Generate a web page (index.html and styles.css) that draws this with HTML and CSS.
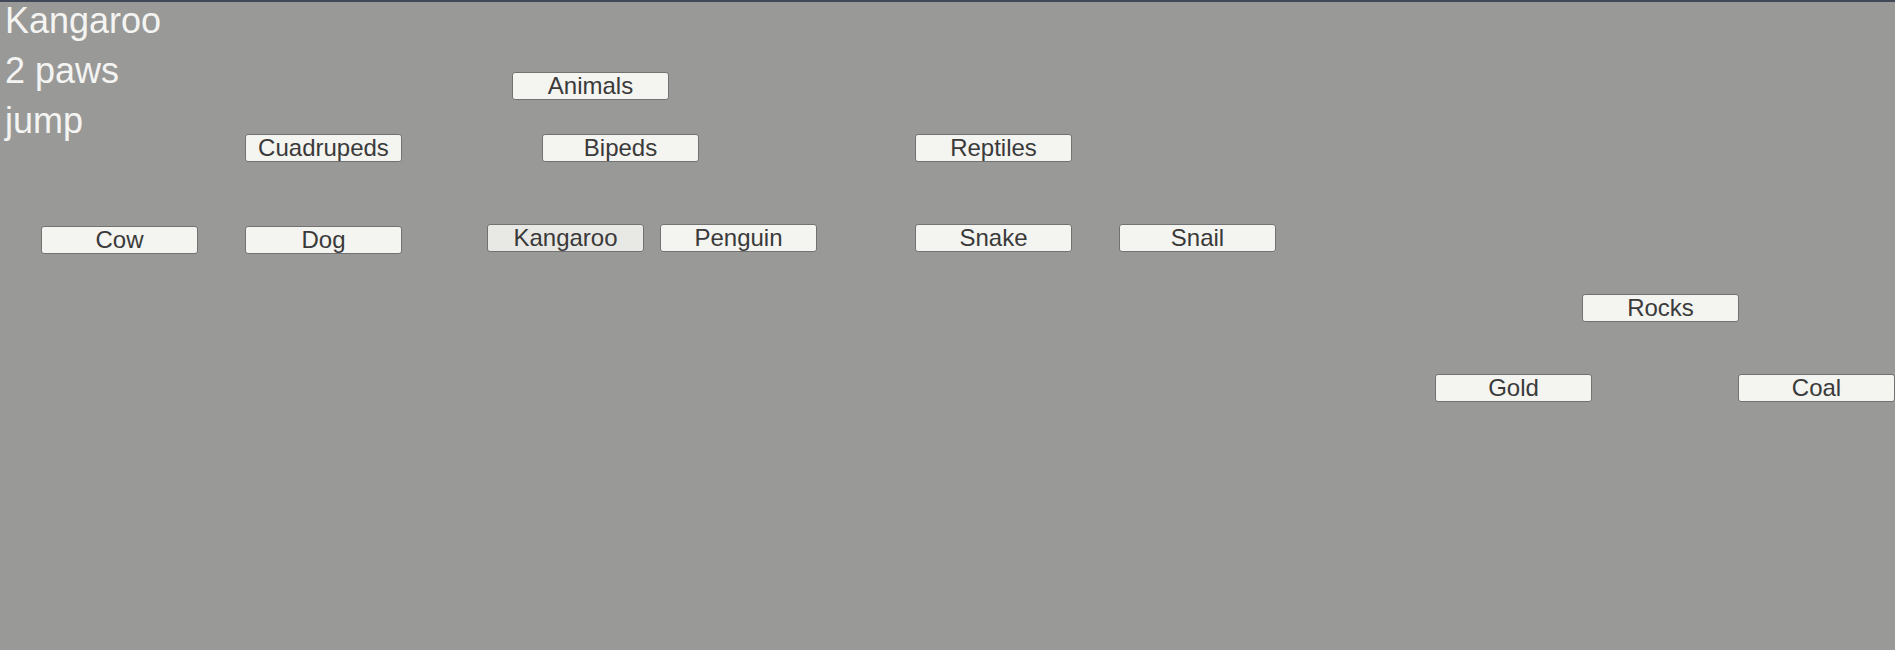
FILE: index.html
```html
<!DOCTYPE html>
<html>
  <head>
    <meta charset="UTF-8" />
    <title>Tree</title>
    <link rel="stylesheet" href="styles.css">
  </head>
  <body>
    <div class="screen">
      <div class="info">
        <div class="info-line">Kangaroo</div>
        <div class="info-line">2 paws</div>
        <div class="info-line">jump</div>
      </div>

      <div class="tree">
        <button class="node" style="left: 512px; top: 72px">Animals</button>
        <button class="node" style="left: 245px; top: 134px">Cuadrupeds</button>
        <button class="node" style="left: 542px; top: 134px">Bipeds</button>
        <button class="node" style="left: 915px; top: 134px">Reptiles</button>
        <button class="node" style="left: 41px; top: 226px">Cow</button>
        <button class="node" style="left: 245px; top: 226px">Dog</button>
        <button class="node selected" style="left: 487px; top: 224px">Kangaroo</button>
        <button class="node" style="left: 660px; top: 224px">Penguin</button>
        <button class="node" style="left: 915px; top: 224px">Snake</button>
        <button class="node" style="left: 1119px; top: 224px">Snail</button>
        <button class="node" style="left: 1582px; top: 294px">Rocks</button>
        <button class="node" style="left: 1435px; top: 374px">Gold</button>
        <button class="node" style="left: 1738px; top: 374px">Coal</button>
      </div>
    </div>
  </body>
</html>
```

FILE: styles.css
```css
* {
  box-sizing: border-box;
  margin: 0;
  padding: 0;
}

body {
  background: #999998;
  font-family: "Liberation Sans", Arial, sans-serif;
  width: 1895px;
  height: 650px;
  overflow: hidden;
}

.screen {
  position: relative;
  height: 100%;
  box-shadow: inset 0 2px 0 #414857;
}

.info {
  padding-left: 5px;
  color: #f4f4f2;
  font-size: 36px;
}

.info-line {
  height: 50px;
  line-height: 41px;
}

.tree {
  position: absolute;
  inset: 0;
  pointer-events: none;
}

.node {
  position: absolute;
  width: 157px;
  height: 28px;
  background: #f4f4f0;
  color: #3a3a3a;
  border: 1px solid #727272;
  border-radius: 3px;
  font-family: "Liberation Sans", Arial, sans-serif;
  font-size: 24px;
  line-height: 26px;
  text-align: center;
  pointer-events: auto;
}

.node.selected {
  background: #e8e8e5;
}
```
